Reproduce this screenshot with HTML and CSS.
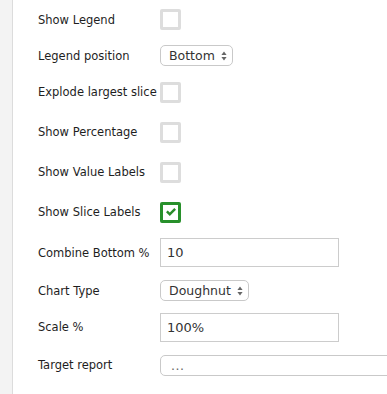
FILE: index.html
```html
<!DOCTYPE html>
<html>
<head>
<meta charset="utf-8">
<link rel="stylesheet" href="styles.css">
</head>
<body>
<div class="page">
  <div class="rail"></div>
  <div class="form">
    <div class="row h39">
      <span class="label">Show Legend</span>
      <span class="check"></span>
    </div>
    <div class="row h33">
      <span class="label">Legend position</span>
      <span class="select w73"><span class="sel-text">Bottom</span><svg class="arrows" width="6" height="10" viewBox="0 0 6 10"><path d="M3 0.5 L5.6 4 L0.4 4 Z M3 9.5 L5.6 6 L0.4 6 Z" fill="#666"/></svg></span>
    </div>
    <div class="row h40">
      <span class="label">Explode largest slice</span>
      <span class="check"></span>
    </div>
    <div class="row h40">
      <span class="label">Show Percentage</span>
      <span class="check"></span>
    </div>
    <div class="row h40">
      <span class="label">Show Value Labels</span>
      <span class="check"></span>
    </div>
    <div class="row h40">
      <span class="label">Show Slice Labels</span>
      <span class="check checked"><svg width="10" height="8" viewBox="0 0 10 8"><path d="M0 4.2 L1.7 2.5 L3.8 4.6 L8.3 0.1 L10 1.8 L3.8 8 Z" fill="#2a8c2a"/></svg></span>
    </div>
    <div class="row h41">
      <span class="label">Combine Bottom %</span>
      <span class="input">10</span>
    </div>
    <div class="row h35">
      <span class="label">Chart Type</span>
      <span class="select w89"><span class="sel-text">Doughnut</span><svg class="arrows" width="6" height="10" viewBox="0 0 6 10"><path d="M3 0.5 L5.6 4 L0.4 4 Z M3 9.5 L5.6 6 L0.4 6 Z" fill="#666"/></svg></span>
    </div>
    <div class="row h38">
      <span class="label">Scale %</span>
      <span class="input">100%</span>
    </div>
    <div class="row h38">
      <span class="label">Target report</span>
      <span class="select wide"><span class="dots">...</span></span>
    </div>
  </div>
</div>
</body>
</html>
```
FILE: styles.css
```css
html, body {
  margin: 0;
  padding: 0;
  background: #ffffff;
}
body {
  font-family: "DejaVu Sans", Verdana, sans-serif;
  font-size: 11.5px;
  color: #1e1e1e;
  overflow: hidden;
}
.page {
  display: flex;
  min-height: 394px;
}
.rail {
  width: 12px;
  flex: none;
  background: #f3f3f3;
  border-right: 1px solid #dcdcdc;
}
.form {
  display: flex;
  flex-direction: column;
  padding-left: 25px;
  flex: 1;
  min-width: 0;
  overflow: hidden;
}
.row {
  display: flex;
  align-items: center;
}
.h33 { height: 33px; }
.h35 { height: 35px; }
.h38 { height: 38px; }
.h39 { height: 39px; }
.h40 { height: 40px; }
.h41 { height: 41px; }
.label {
  width: 122px;
  flex: none;
  white-space: nowrap;
}
.check {
  box-sizing: border-box;
  width: 21px;
  height: 21px;
  border: 3px solid #dddddd;
  border-radius: 2px;
  background: #fff;
  display: flex;
  align-items: center;
  justify-content: center;
}
.check.checked {
  border-color: #28902b;
}
.select {
  box-sizing: border-box;
  height: 21px;
  border: 1px solid #c9c9c9;
  border-radius: 5px;
  background: #fff;
  display: flex;
  align-items: center;
  padding-left: 8px;
  padding-right: 5px;
  font-size: 12.5px;
  color: #333;
}
.w73 { width: 73px; }
.w89 { width: 89px; }
.sel-text {
  flex: 1;
  white-space: nowrap;
}
.arrows {
  flex: none;
}
.wide {
  width: 260px;
  flex: none;
}
.dots {
  color: #666;
  padding-left: 2px;
  letter-spacing: 0.5px;
}
.input {
  box-sizing: border-box;
  width: 179px;
  height: 29px;
  border: 1px solid #cccccc;
  background: #fff;
  display: flex;
  align-items: center;
  padding-left: 6px;
  font-size: 13px;
  color: #333;
}
```
